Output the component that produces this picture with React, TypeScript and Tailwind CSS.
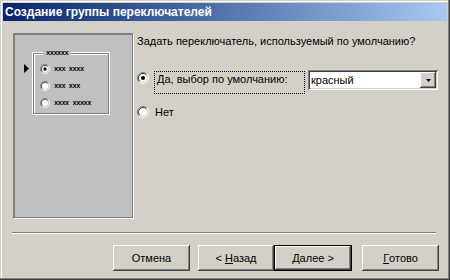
import React from 'react';

const FONT = "font-['Liberation_Sans',Arial,sans-serif]";

function Radio({ checked, size = 12 }: { checked?: boolean; size?: number }) {
  return (
    <svg width={size} height={size} viewBox="0 0 12 12" className="shrink-0">
      <circle cx="6" cy="6" r="4" fill="#ffffff" />
      <path d="M2.11 9.89 A5.5 5.5 0 0 1 9.89 2.11" stroke="#808080" fill="none" />
      <path d="M9.89 2.11 A5.5 5.5 0 0 1 2.11 9.89" stroke="#ffffff" fill="none" />
      <path d="M2.82 9.18 A4.5 4.5 0 0 1 9.18 2.82" stroke="#404040" fill="none" />
      <path d="M9.18 2.82 A4.5 4.5 0 0 1 2.82 9.18" stroke="#d4d0c8" fill="none" />
      {checked && <circle cx="6" cy="6" r="2" fill="#000000" />}
    </svg>
  );
}

const raised =
  'shadow-[inset_-1px_-1px_#404040,inset_1px_1px_#ffffff,inset_-2px_-2px_#808080]';

function WizButton({ children, w, isDefault }: { children: React.ReactNode; w: string; isDefault?: boolean }) {
  if (isDefault) {
    return (
      <div className={`${w} h-[26px] border border-black bg-[#d4d0c8] flex`}>
        <div className={`flex-1 flex items-center justify-center ${raised}`}>{children}</div>
      </div>
    );
  }
  return (
    <div className={`${w} h-[26px] bg-[#d4d0c8] flex items-center justify-center ${raised}`}>
      {children}
    </div>
  );
}

function PreviewOption({ checked, label }: { checked?: boolean; label: string }) {
  return (
    <div className="h-[17px] flex items-center pl-[6px] gap-[4px]">
      <Radio checked={checked} size={10} />
      <span className="font-['Liberation_Mono',monospace] font-bold text-[7px] leading-[6px] tracking-[-0.5px] text-black">
        {label}
      </span>
    </div>
  );
}

export default function App() {
  return (
    <div
      className={`w-[450px] h-[280px] bg-[#d4d0c8] p-[3px] flex flex-col text-[11px] text-black ${FONT} shadow-[inset_-1px_-1px_#404040,inset_-2px_-2px_#808080,inset_1px_1px_#d4d0c8,inset_2px_2px_#ffffff]`}
    >
      {/* title bar */}
      <div className="h-[18px] flex items-center pl-[2px] bg-linear-to-r from-[#0a246a] to-[#a6caf0]">
        <span className="text-white font-bold text-[12px] leading-[14px]">Создание группы переключателей</span>
      </div>

      <div className="flex-1 flex flex-col">
        <div className="flex pt-[12px] pl-[10px]">
          {/* preview */}
          <div className="w-[121px] h-[186px] bg-[#c0c0c0] border border-t-[#808080] border-l-[#808080] border-r-white border-b-white shadow-[inset_1px_1px_#808080,inset_-1px_-1px_#808080] flex items-start pt-[19px]">
            <svg width="5" height="9" viewBox="0 0 5 9" className="ml-[10px] mt-[11px] shrink-0">
              <polygon points="0,0 5,4.5 0,9" fill="#000000" />
            </svg>
            <div className="relative ml-[4px] w-[76px] h-[61px] border border-[#808080] shadow-[inset_1px_1px_#ffffff] outline outline-1 outline-white pt-[6px]">
              <span className="absolute left-[9px] top-[-4px] px-[3px] bg-[#c0c0c0] font-['Liberation_Mono',monospace] font-bold text-[7px] leading-[6px] tracking-[-0.5px]">
                xxxxxx
              </span>
              <PreviewOption checked label="xxx xxxx" />
              <PreviewOption label="xxx xxx" />
              <PreviewOption label="xxxx xxxxx" />
            </div>
          </div>

          {/* options */}
          <div className="ml-[3px] flex flex-col">
            <div className="mt-[2px] leading-[13px]">Задать переключатель, используемый по умолчанию?</div>
            <div className="mt-[23px] flex items-start">
              <div className="mt-[1px]">
                <Radio checked />
              </div>
              <div className="ml-[5px] w-[151px] h-[23px] border border-dotted border-black pl-[2px] pt-[1px] leading-[13px]">
                Да, выбор по умолчанию:
              </div>
              <div className="ml-[3px] -mt-[1px] w-[130px] h-[20px] bg-white flex p-[2px] shadow-[inset_1px_1px_#808080,inset_-1px_-1px_#ffffff,inset_2px_2px_#404040,inset_-2px_-2px_#d4d0c8]">
                <div className="flex-1 flex items-center pl-[1px] leading-[13px]">красный</div>
                <div className={`w-[16px] h-[16px] bg-[#d4d0c8] flex items-center justify-center ${raised}`}>
                  <svg width="5" height="3" viewBox="0 0 5 3">
                    <polygon points="0,0 5,0 2.5,3" fill="#000000" />
                  </svg>
                </div>
              </div>
            </div>
            <div className="mt-[12px] flex items-center h-[12px]">
              <Radio />
              <span className="ml-[6px] leading-[13px]">Нет</span>
            </div>
          </div>
        </div>

        {/* separator */}
        <div className="ml-[9px] mt-[13px] w-[424px] border-t border-t-[#808080] border-b border-b-white" />

        {/* buttons */}
        <div className="mt-[11px] flex justify-end pr-[8px]">
          <WizButton w="w-[77px]">Отмена</WizButton>
          <div className="ml-[8px] flex">
            <WizButton w="w-[76px]">
              &lt; <span className="underline ml-[3px]">Н</span>азад
            </WizButton>
            <WizButton w="w-[78px]" isDefault>
              <span className="underline">Д</span>алее &gt;
            </WizButton>
          </div>
          <div className="ml-[10px]">
            <WizButton w="w-[77px]">
              <span className="underline">Г</span>отово
            </WizButton>
          </div>
        </div>
      </div>
    </div>
  );
}
